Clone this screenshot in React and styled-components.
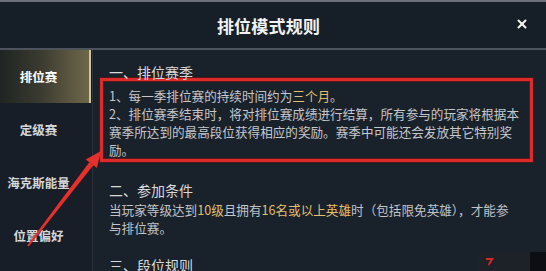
import styled, { createGlobalStyle } from "styled-components"
import { X } from "lucide-react"

const GlobalStyle = createGlobalStyle`
  html, body {
    margin: 0;
    padding: 0;
    background: #19212b;
  }
  * {
    box-sizing: border-box;
  }
`

const Page = styled.div`
  position: relative;
  width: 546px;
  height: 271px;
  overflow: hidden;
  background: #19212b;
  font-family: "Noto Sans CJK SC", "Noto Sans", sans-serif;
  color: #bfc1c4;
`

const TopLine = styled.div`
  height: 2px;
  background: #6b7079;
`

const Header = styled.header`
  display: grid;
  grid-template-columns: 1fr auto 1fr;
  align-items: center;
  height: 46px;
  padding: 0 17px 0 0;
  background: #161e27;
`

const Title = styled.h1`
  grid-column: 2;
  margin: 0 0 0 8px;
  font-size: 17px;
  font-weight: 700;
  color: #f2f2f2;
  letter-spacing: 0.2px;
`

const Close = styled.button`
  grid-column: 3;
  justify-self: end;
  display: flex;
  padding: 0;
  border: 0;
  background: none;
  color: #f4f4f0;
  margin-top: -2px;
`

const HeaderRule = styled.div`
  height: 2px;
  background: #4d545d;
`

const Body = styled.div`
  display: flex;
  height: 221px;
`

const Sidebar = styled.nav`
  width: 93px;
  flex: none;
  display: flex;
  flex-direction: column;
  background: #171e27;
  border-right: 1px solid #2b323c;
`

const Tab = styled.div`
  height: 53px;
  display: flex;
  align-items: center;
  justify-content: center;
  padding-right: 12px;
  font-size: 12.5px;
  font-weight: 700;
  color: ${(p) => (p.$active ? "#ffffff" : "#d6d7d9")};
  background: ${(p) =>
    p.$active
      ? "linear-gradient(90deg, #1f2522 0%, #3a3a30 45%, #5c5740 80%, #6e6748 100%)"
      : "transparent"};
  border-right: ${(p) => (p.$active ? "2px solid #cfc69a" : "2px solid transparent")};
  margin-right: 1px;
`

const Content = styled.main`
  flex: 1;
  padding: 13px 0 0 16px;
`

const Heading = styled.h2`
  margin: ${(p) => p.$gap || 0}px 0 0;
  font-size: 14px;
  line-height: 18px;
  font-weight: 400;
  color: #d9dadc;
`

const Paragraph = styled.p`
  margin: 2px 0 0;
  white-space: nowrap;
  font-size: 12.6px;
  line-height: 18px;
  color: #c2c4c7;
`

const Gold = styled.span`
  color: #e3c06e;
`

const Highlight = styled.div`
  margin: -3px 0 0 -9px;
  width: 433px;
  padding: 6px 8px 0 6px;
  border: 3px solid #dc2b2b;
  box-shadow: 0 0 0 1px #4b1717, inset 0 0 0 1px #5a1a1a;

  p {
    margin: 0;
    white-space: nowrap;
    font-size: 12.6px;
    line-height: 18px;
    color: #c6c8cb;
  }
`

const Arrow = styled.svg`
  position: absolute;
  left: 0;
  top: 0;
  pointer-events: none;
`

const Watermark = styled.div`
  position: absolute;
  right: 0;
  bottom: 0;
  display: flex;
  height: 19px;
`

const MarkBox = styled.div`
  width: 52px;
  display: flex;
  align-items: center;
  padding-left: 8px;
  background: #1d2128;
`

const MarkEnd = styled.div`
  width: 16px;
  background: #0c0e11;
`

export default function App() {
  const tabs = ["排位赛", "定级赛", "海克斯能量", "位置偏好"]

  return (
    <>
      <GlobalStyle />
      <Page>
        <TopLine />
        <Header>
          <Title>排位模式规则</Title>
          <Close aria-label="关闭">
            <X size={14} strokeWidth={3.4} />
          </Close>
        </Header>
        <HeaderRule />
        <Body>
          <Sidebar>
            {tabs.map((tab, i) => (
              <Tab key={tab} $active={i === 0}>
                {tab}
              </Tab>
            ))}
          </Sidebar>
          <Content>
            <Heading>一、排位赛季</Heading>
            <Highlight>
              <p>
                1、每一季排位赛的持续时间约为<Gold>三个月</Gold>。
              </p>
              <p>
                2、排位赛季结束时，将对排位赛成绩进行结算，所有参与的玩家将根据本
                <br />
                赛季所达到的最高段位获得相应的奖励。赛季中可能还会发放其它特别奖
                <br />
                励。
              </p>
            </Highlight>
            <Heading $gap={19}>二、参加条件</Heading>
            <Paragraph>
              当玩家等级达到<Gold>10级</Gold>且拥有<Gold>16名或以上英雄</Gold>
              时（包括限免英雄），才能参
              <br />
              与排位赛。
            </Paragraph>
            <Heading $gap={19}>三、段位规则</Heading>
          </Content>
        </Body>

        <Arrow width="546" height="271" viewBox="0 0 546 271">
          <polygon
            points="28.8,246.6 27.2,245.4 89.3,162.2 93.3,165.2"
            fill="#e5302b"
          />
          <polygon points="101,151 96.9,168 85.7,159.4" fill="#e5302b" />
        </Arrow>

        <Watermark>
          <MarkBox>
            <svg width="8" height="8" viewBox="0 0 8 8">
              <path d="M0 0 H8 L3 8 L2 6 L4.5 2 H0 Z" fill="#d8262a" />
            </svg>
          </MarkBox>
          <MarkEnd />
        </Watermark>
      </Page>
    </>
  )
}
